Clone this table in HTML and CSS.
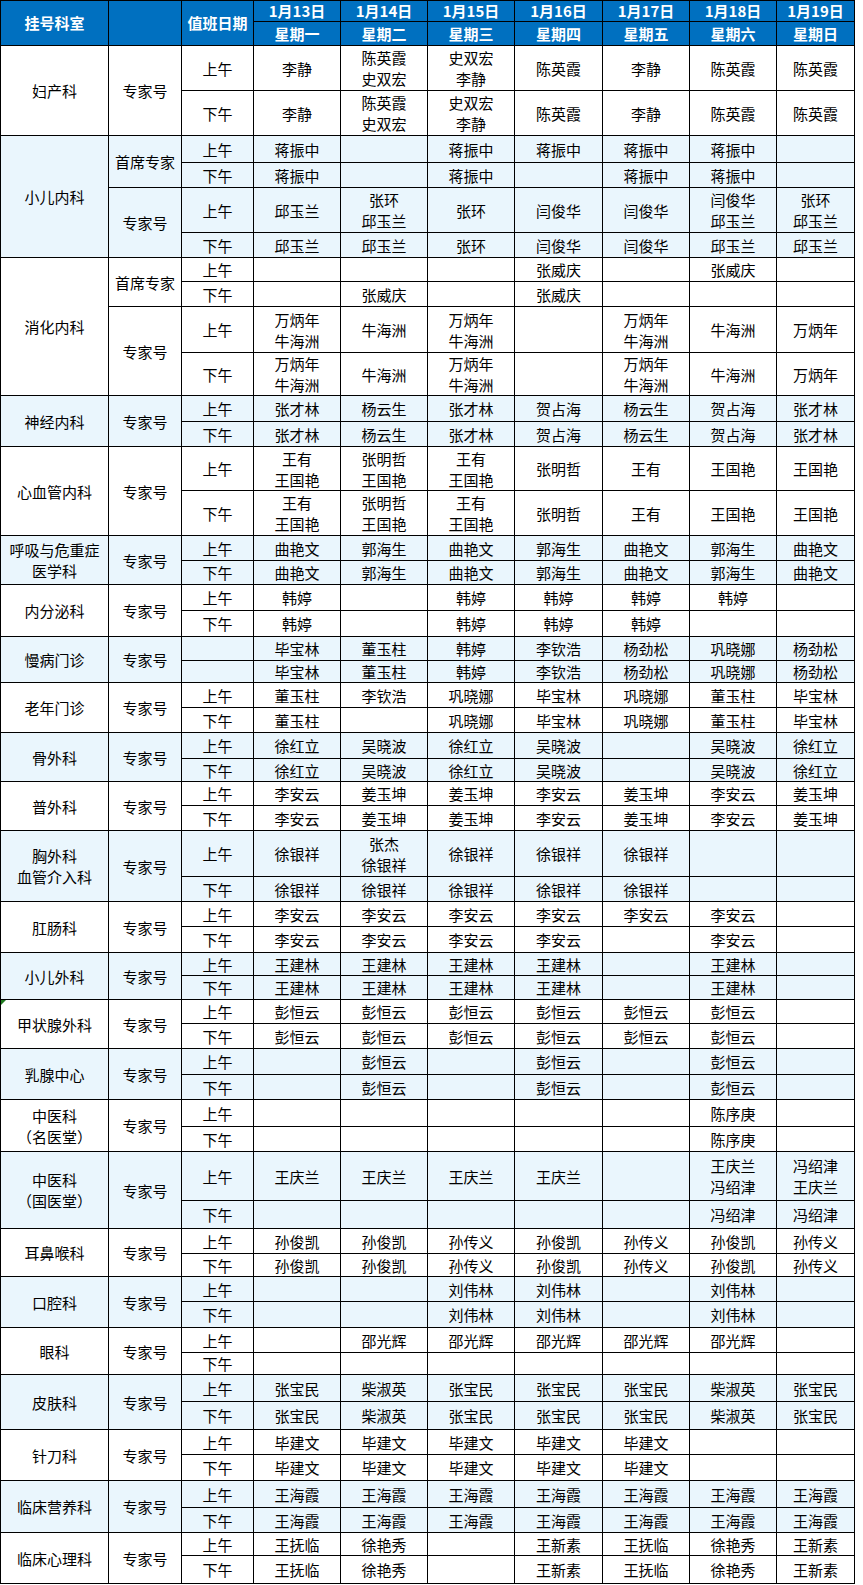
FILE: index.html
```html
<!DOCTYPE html>
<html lang="zh-CN">
<head>
<meta charset="utf-8">
<title>专家出诊表</title>
<link rel="stylesheet" href="styles.css">
</head>
<body>
<table class="t">
<colgroup>
<col class="c1"><col class="c2"><col class="c3">
<col class="c4"><col class="c4"><col class="c4"><col class="c5"><col class="c4"><col class="c4"><col class="c6">
</colgroup>
<thead>
<tr class="h21"><th rowspan="2">挂号科室</th><th rowspan="2"></th><th rowspan="2">值班日期</th><th>1月13日</th><th>1月14日</th><th>1月15日</th><th>1月16日</th><th>1月17日</th><th>1月18日</th><th>1月19日</th></tr>
<tr class="h24"><th>星期一</th><th>星期二</th><th>星期三</th><th>星期四</th><th>星期五</th><th>星期六</th><th>星期日</th></tr>
</thead>
<tbody>
<!-- 妇产科 -->
<tr class="h45"><td rowspan="2">妇产科</td><td rowspan="2">专家号</td><td>上午</td><td>李静</td><td>陈英霞<br>史双宏</td><td>史双宏<br>李静</td><td>陈英霞</td><td>李静</td><td>陈英霞</td><td>陈英霞</td></tr>
<tr class="h45"><td>下午</td><td>李静</td><td>陈英霞<br>史双宏</td><td>史双宏<br>李静</td><td>陈英霞</td><td>李静</td><td>陈英霞</td><td>陈英霞</td></tr>
<!-- 小儿内科 -->
<tr class="b h27"><td rowspan="4">小儿内科</td><td rowspan="2">首席专家</td><td>上午</td><td>蒋振中</td><td></td><td>蒋振中</td><td>蒋振中</td><td>蒋振中</td><td>蒋振中</td><td></td></tr>
<tr class="b h25"><td>下午</td><td>蒋振中</td><td></td><td>蒋振中</td><td></td><td>蒋振中</td><td>蒋振中</td><td></td></tr>
<tr class="b h45"><td rowspan="2">专家号</td><td>上午</td><td>邱玉兰</td><td>张环<br>邱玉兰</td><td>张环</td><td>闫俊华</td><td>闫俊华</td><td>闫俊华<br>邱玉兰</td><td>张环<br>邱玉兰</td></tr>
<tr class="b h25"><td>下午</td><td>邱玉兰</td><td>邱玉兰</td><td>张环</td><td>闫俊华</td><td>闫俊华</td><td>邱玉兰</td><td>邱玉兰</td></tr>
<!-- 消化内科 -->
<tr class="h24"><td rowspan="4">消化内科</td><td rowspan="2">首席专家</td><td>上午</td><td></td><td></td><td></td><td>张威庆</td><td></td><td>张威庆</td><td></td></tr>
<tr class="h25"><td>下午</td><td></td><td>张威庆</td><td></td><td>张威庆</td><td></td><td></td><td></td></tr>
<tr class="h46"><td rowspan="2">专家号</td><td>上午</td><td>万炳年<br>牛海洲</td><td>牛海洲</td><td>万炳年<br>牛海洲</td><td></td><td>万炳年<br>牛海洲</td><td>牛海洲</td><td>万炳年</td></tr>
<tr class="h43"><td>下午</td><td>万炳年<br>牛海洲</td><td>牛海洲</td><td>万炳年<br>牛海洲</td><td></td><td>万炳年<br>牛海洲</td><td>牛海洲</td><td>万炳年</td></tr>
<!-- 神经内科 -->
<tr class="b h26"><td rowspan="2">神经内科</td><td rowspan="2">专家号</td><td>上午</td><td>张才林</td><td>杨云生</td><td>张才林</td><td>贺占海</td><td>杨云生</td><td>贺占海</td><td>张才林</td></tr>
<tr class="b h25"><td>下午</td><td>张才林</td><td>杨云生</td><td>张才林</td><td>贺占海</td><td>杨云生</td><td>贺占海</td><td>张才林</td></tr>
<!-- 心血管内科 -->
<tr class="h44"><td rowspan="2">心血管内科</td><td rowspan="2">专家号</td><td>上午</td><td>王有<br>王国艳</td><td>张明哲<br>王国艳</td><td>王有<br>王国艳</td><td>张明哲</td><td>王有</td><td>王国艳</td><td>王国艳</td></tr>
<tr class="h45"><td>下午</td><td>王有<br>王国艳</td><td>张明哲<br>王国艳</td><td>王有<br>王国艳</td><td>张明哲</td><td>王有</td><td>王国艳</td><td>王国艳</td></tr>
<!-- 呼吸与危重症医学科 -->
<tr class="b h25"><td rowspan="2">呼吸与危重症<br>医学科</td><td rowspan="2">专家号</td><td>上午</td><td>曲艳文</td><td>郭海生</td><td>曲艳文</td><td>郭海生</td><td>曲艳文</td><td>郭海生</td><td>曲艳文</td></tr>
<tr class="b h24"><td>下午</td><td>曲艳文</td><td>郭海生</td><td>曲艳文</td><td>郭海生</td><td>曲艳文</td><td>郭海生</td><td>曲艳文</td></tr>
<!-- 内分泌科 -->
<tr class="h26"><td rowspan="2">内分泌科</td><td rowspan="2">专家号</td><td>上午</td><td>韩婷</td><td></td><td>韩婷</td><td>韩婷</td><td>韩婷</td><td>韩婷</td><td></td></tr>
<tr class="h26"><td>下午</td><td>韩婷</td><td></td><td>韩婷</td><td>韩婷</td><td>韩婷</td><td></td><td></td></tr>
<!-- 慢病门诊 -->
<tr class="b h24"><td rowspan="2">慢病门诊</td><td rowspan="2">专家号</td><td></td><td>毕宝林</td><td>董玉柱</td><td>韩婷</td><td>李钦浩</td><td>杨劲松</td><td>巩晓娜</td><td>杨劲松</td></tr>
<tr class="b h22"><td></td><td>毕宝林</td><td>董玉柱</td><td>韩婷</td><td>李钦浩</td><td>杨劲松</td><td>巩晓娜</td><td>杨劲松</td></tr>
<!-- 老年门诊 -->
<tr class="h25"><td rowspan="2">老年门诊</td><td rowspan="2">专家号</td><td>上午</td><td>董玉柱</td><td>李钦浩</td><td>巩晓娜</td><td>毕宝林</td><td>巩晓娜</td><td>董玉柱</td><td>毕宝林</td></tr>
<tr class="h25"><td>下午</td><td>董玉柱</td><td></td><td>巩晓娜</td><td>毕宝林</td><td>巩晓娜</td><td>董玉柱</td><td>毕宝林</td></tr>
<!-- 骨外科 -->
<tr class="b h26"><td rowspan="2">骨外科</td><td rowspan="2">专家号</td><td>上午</td><td>徐红立</td><td>吴晓波</td><td>徐红立</td><td>吴晓波</td><td></td><td>吴晓波</td><td>徐红立</td></tr>
<tr class="b h23"><td>下午</td><td>徐红立</td><td>吴晓波</td><td>徐红立</td><td>吴晓波</td><td></td><td>吴晓波</td><td>徐红立</td></tr>
<!-- 普外科 -->
<tr class="h24"><td rowspan="2">普外科</td><td rowspan="2">专家号</td><td>上午</td><td>李安云</td><td>姜玉坤</td><td>姜玉坤</td><td>李安云</td><td>姜玉坤</td><td>李安云</td><td>姜玉坤</td></tr>
<tr class="h25"><td>下午</td><td>李安云</td><td>姜玉坤</td><td>姜玉坤</td><td>李安云</td><td>姜玉坤</td><td>李安云</td><td>姜玉坤</td></tr>
<!-- 胸外科 -->
<tr class="b h46"><td rowspan="2">胸外科<br>血管介入科</td><td rowspan="2">专家号</td><td>上午</td><td>徐银祥</td><td>张杰<br>徐银祥</td><td>徐银祥</td><td>徐银祥</td><td>徐银祥</td><td></td><td></td></tr>
<tr class="b h25"><td>下午</td><td>徐银祥</td><td>徐银祥</td><td>徐银祥</td><td>徐银祥</td><td>徐银祥</td><td></td><td></td></tr>
<!-- 肛肠科 -->
<tr class="h25"><td rowspan="2">肛肠科</td><td rowspan="2">专家号</td><td>上午</td><td>李安云</td><td>李安云</td><td>李安云</td><td>李安云</td><td>李安云</td><td>李安云</td><td></td></tr>
<tr class="h26"><td>下午</td><td>李安云</td><td>李安云</td><td>李安云</td><td>李安云</td><td></td><td>李安云</td><td></td></tr>
<!-- 小儿外科 -->
<tr class="b h23"><td rowspan="2">小儿外科</td><td rowspan="2">专家号</td><td>上午</td><td>王建林</td><td>王建林</td><td>王建林</td><td>王建林</td><td></td><td>王建林</td><td></td></tr>
<tr class="b h24"><td>下午</td><td>王建林</td><td>王建林</td><td>王建林</td><td>王建林</td><td></td><td>王建林</td><td></td></tr>
<!-- 甲状腺外科 -->
<tr class="h24"><td rowspan="2" class="note">甲状腺外科</td><td rowspan="2">专家号</td><td>上午</td><td>彭恒云</td><td>彭恒云</td><td>彭恒云</td><td>彭恒云</td><td>彭恒云</td><td>彭恒云</td><td></td></tr>
<tr class="h25"><td>下午</td><td>彭恒云</td><td>彭恒云</td><td>彭恒云</td><td>彭恒云</td><td>彭恒云</td><td>彭恒云</td><td></td></tr>
<!-- 乳腺中心 -->
<tr class="b h26"><td rowspan="2">乳腺中心</td><td rowspan="2">专家号</td><td>上午</td><td></td><td>彭恒云</td><td></td><td>彭恒云</td><td></td><td>彭恒云</td><td></td></tr>
<tr class="b h25"><td>下午</td><td></td><td>彭恒云</td><td></td><td>彭恒云</td><td></td><td>彭恒云</td><td></td></tr>
<!-- 中医科（名医堂） -->
<tr class="h27"><td rowspan="2">中医科<br>（名医堂）</td><td rowspan="2">专家号</td><td>上午</td><td></td><td></td><td></td><td></td><td></td><td>陈序庚</td><td></td></tr>
<tr class="h25"><td>下午</td><td></td><td></td><td></td><td></td><td></td><td>陈序庚</td><td></td></tr>
<!-- 中医科（国医堂） -->
<tr class="b h49"><td rowspan="2">中医科<br>（国医堂）</td><td rowspan="2">专家号</td><td>上午</td><td>王庆兰</td><td>王庆兰</td><td>王庆兰</td><td>王庆兰</td><td></td><td>王庆兰<br>冯绍津</td><td>冯绍津<br>王庆兰</td></tr>
<tr class="b h28"><td>下午</td><td></td><td></td><td></td><td></td><td></td><td>冯绍津</td><td>冯绍津</td></tr>
<!-- 耳鼻喉科 -->
<tr class="h25"><td rowspan="2">耳鼻喉科</td><td rowspan="2">专家号</td><td>上午</td><td>孙俊凯</td><td>孙俊凯</td><td>孙传义</td><td>孙俊凯</td><td>孙传义</td><td>孙俊凯</td><td>孙传义</td></tr>
<tr class="h23"><td>下午</td><td>孙俊凯</td><td>孙俊凯</td><td>孙传义</td><td>孙俊凯</td><td>孙传义</td><td>孙俊凯</td><td>孙传义</td></tr>
<!-- 口腔科 -->
<tr class="b h25"><td rowspan="2">口腔科</td><td rowspan="2">专家号</td><td>上午</td><td></td><td></td><td>刘伟林</td><td>刘伟林</td><td></td><td>刘伟林</td><td></td></tr>
<tr class="b h26"><td>下午</td><td></td><td></td><td>刘伟林</td><td>刘伟林</td><td></td><td>刘伟林</td><td></td></tr>
<!-- 眼科 -->
<tr class="h25"><td rowspan="2">眼科</td><td rowspan="2">专家号</td><td>上午</td><td></td><td>邵光辉</td><td>邵光辉</td><td>邵光辉</td><td>邵光辉</td><td>邵光辉</td><td></td></tr>
<tr class="h22"><td>下午</td><td></td><td></td><td></td><td></td><td></td><td></td><td></td></tr>
<!-- 皮肤科 -->
<tr class="b h27"><td rowspan="2">皮肤科</td><td rowspan="2">专家号</td><td>上午</td><td>张宝民</td><td>柴淑英</td><td>张宝民</td><td>张宝民</td><td>张宝民</td><td>柴淑英</td><td>张宝民</td></tr>
<tr class="b h28"><td>下午</td><td>张宝民</td><td>柴淑英</td><td>张宝民</td><td>张宝民</td><td>张宝民</td><td>柴淑英</td><td>张宝民</td></tr>
<!-- 针刀科 -->
<tr class="h25"><td rowspan="2">针刀科</td><td rowspan="2">专家号</td><td>上午</td><td>毕建文</td><td>毕建文</td><td>毕建文</td><td>毕建文</td><td>毕建文</td><td></td><td></td></tr>
<tr class="h26"><td>下午</td><td>毕建文</td><td>毕建文</td><td>毕建文</td><td>毕建文</td><td>毕建文</td><td></td><td></td></tr>
<!-- 临床营养科 -->
<tr class="b h27"><td rowspan="2">临床营养科</td><td rowspan="2">专家号</td><td>上午</td><td>王海霞</td><td>王海霞</td><td>王海霞</td><td>王海霞</td><td>王海霞</td><td>王海霞</td><td>王海霞</td></tr>
<tr class="b h25"><td>下午</td><td>王海霞</td><td>王海霞</td><td>王海霞</td><td>王海霞</td><td>王海霞</td><td>王海霞</td><td>王海霞</td></tr>
<!-- 临床心理科 -->
<tr class="h23"><td rowspan="2">临床心理科</td><td rowspan="2">专家号</td><td>上午</td><td>王抚临</td><td>徐艳秀</td><td></td><td>王新素</td><td>王抚临</td><td>徐艳秀</td><td>王新素</td></tr>
<tr class="h28"><td>下午</td><td>王抚临</td><td>徐艳秀</td><td></td><td>王新素</td><td>王抚临</td><td>徐艳秀</td><td>王新素</td></tr>
</tbody>
</table>
</body>
</html>
```

FILE: styles.css
```css
html, body {
  margin: 0;
  padding: 0;
  background: #ffffff;
}

body {
  font-family: "Noto Sans CJK SC", "Noto Sans", sans-serif;
  color: #000000;
}

.t {
  border-collapse: collapse;
  table-layout: fixed;
  width: 854px;
  font-size: 15px;
  line-height: 21px;
}

.c1 { width: 108px; }
.c2 { width: 73px; }
.c3 { width: 72px; }
.c4 { width: 87px; }
.c5 { width: 88px; }
.c6 { width: 78px; }

.t th,
.t td {
  border: 1px solid #000000;
  padding: 0;
  text-align: center;
  vertical-align: middle;
  white-space: nowrap;
  overflow: hidden;
}

.t th {
  background: #0070c0;
  color: #ffffff;
  font-weight: bold;
  line-height: 20px;
}

.t .b td {
  background: #eaf6fd;
}

.note {
  position: relative;
}

.note::before {
  content: "";
  position: absolute;
  left: 0;
  top: 0;
  border-top: 5px solid #1f7a1f;
  border-right: 5px solid transparent;
}

.h21 { height: 21px; }
.h22 { height: 22px; }
.h23 { height: 23px; }
.h24 { height: 24px; }
.h25 { height: 25px; }
.h26 { height: 26px; }
.h27 { height: 27px; }
.h28 { height: 28px; }
.h43 { height: 43px; }
.h44 { height: 44px; }
.h45 { height: 45px; }
.h46 { height: 46px; }
.h49 { height: 49px; }
```
